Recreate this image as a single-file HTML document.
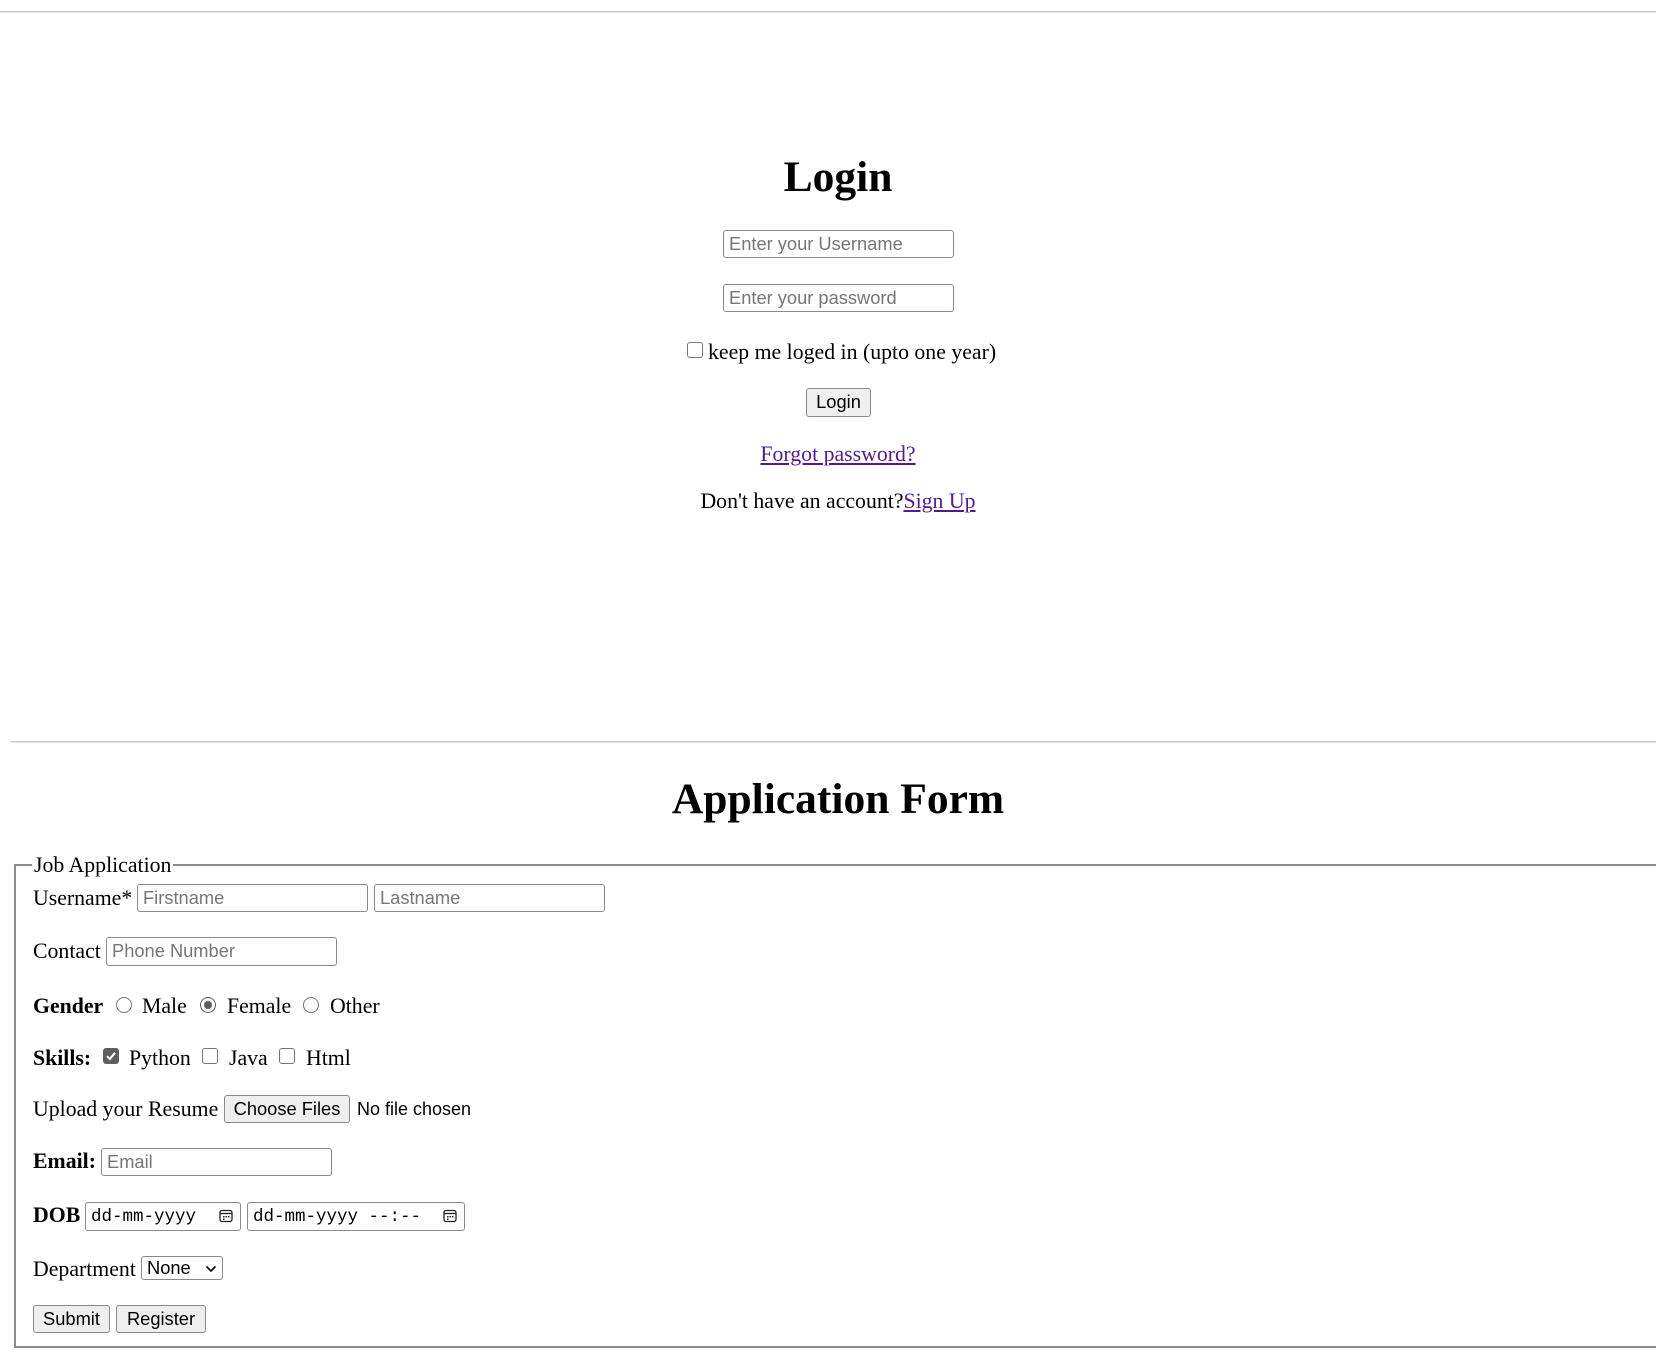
<!DOCTYPE html>
<html><head><meta charset="utf-8"><style>
*{box-sizing:border-box;margin:0;padding:0}
html,body{width:1656px;height:1360px;overflow:hidden;background:#fff;position:relative}
body{font-family:"Liberation Serif",serif;font-size:21.8px;color:#000}
.a{position:absolute;white-space:nowrap;line-height:26px}
.hr{position:absolute;height:1.5px;background:#c8c8c8;border-bottom:1px solid #e6e6e6}
.in{position:absolute;border:1.4px solid #8a8a8a;border-radius:3px;background:#fff;font-family:"Liberation Sans",sans-serif;font-size:18.3px;color:#767676;padding-left:5px;line-height:25px;white-space:nowrap}
.btn{position:absolute;border:1.4px solid #8a8a8a;border-radius:3px;background:#efefef;font-family:"Liberation Sans",sans-serif;font-size:18.3px;color:#000;text-align:center;line-height:25px;white-space:nowrap}
.c{text-align:center;left:11px;width:1654px}
.lnk{color:#551a8b;text-decoration:underline}
.cb{position:absolute;width:16px;height:16px;border:1.4px solid #767676;border-radius:3px;background:#fff}
.rd{position:absolute;width:16px;height:16px;border:1.4px solid #767676;border-radius:50%;background:#fff}
.mono{font-family:"Liberation Mono",monospace;color:#000;font-size:17.5px;line-height:29px}
b{font-weight:bold}
</style></head><body>
<div class="hr" style="left:0;top:11px;width:1656px"></div>

<div class="a c" style="top:151px;font-size:43.5px;line-height:52px;font-weight:bold">Login</div>
<div class="in" style="left:723px;top:230px;width:231px;height:28px">Enter your Username</div>
<div class="in" style="left:723px;top:284px;width:231px;height:28px">Enter your password</div>
<div class="cb" style="left:687px;top:342px"></div>
<div class="a" style="left:708px;top:339px">keep me loged in (upto one year)</div>
<div class="btn" style="left:806px;top:388px;width:65px;height:29px">Login</div>
<div class="a c" style="top:441px"><span class="lnk">Forgot password?</span></div>
<div class="a c" style="top:488px">Don't have an account?<span class="lnk">Sign Up</span></div>

<div class="hr" style="left:11px;top:741px;width:1645px"></div>
<div class="a c" style="top:773px;font-size:43.5px;line-height:52px;font-weight:bold">Application Form</div>

<div style="position:absolute;left:14px;top:864px;width:1700px;height:484px;border:2px solid #8a8a8a"></div>
<div class="a" style="left:32px;top:852px;background:#fff;padding:0 2px">Job Application</div>

<div class="a" style="left:33px;top:885px">Username*</div>
<div class="in" style="left:137px;top:884px;width:231px;height:28px">Firstname</div>
<div class="in" style="left:374px;top:884px;width:231px;height:28px">Lastname</div>

<div class="a" style="left:33px;top:938px">Contact</div>
<div class="in" style="left:106px;top:937px;width:231px;height:29px">Phone Number</div>

<div class="a" style="left:33px;top:993px"><b>Gender</b></div>
<div class="rd" style="left:116px;top:997px"></div>
<div class="a" style="left:142px;top:993px">Male</div>
<div class="rd" style="left:200px;top:997px;border-color:#5e5e5e"><div style="position:absolute;left:2.5px;top:2.5px;width:8px;height:8px;border-radius:50%;background:#5e5e5e"></div></div>
<div class="a" style="left:227px;top:993px">Female</div>
<div class="rd" style="left:303px;top:997px"></div>
<div class="a" style="left:330px;top:993px">Other</div>

<div class="a" style="left:33px;top:1045px"><b>Skills:</b></div>
<div class="cb" style="left:103px;top:1048px;background:#5e5e5e;border-color:#5e5e5e"><svg width="14" height="14" viewBox="0 0 14 14" style="position:absolute;left:0;top:0"><path d="M3 7.2 L5.8 10 L11 3.8" stroke="#fff" stroke-width="2" fill="none"/></svg></div>
<div class="a" style="left:129px;top:1045px">Python</div>
<div class="cb" style="left:202px;top:1048px"></div>
<div class="a" style="left:229px;top:1045px">Java</div>
<div class="cb" style="left:279px;top:1048px"></div>
<div class="a" style="left:306px;top:1045px">Html</div>

<div class="a" style="left:33px;top:1096px">Upload your Resume</div>
<div class="btn" style="left:224px;top:1095px;width:126px;height:28px">Choose Files</div>
<div class="a" style="left:357px;top:1096px;font-family:'Liberation Sans',sans-serif;font-size:18px">No file chosen</div>

<div class="a" style="left:33px;top:1148px"><b>Email:</b></div>
<div class="in" style="left:101px;top:1148px;width:231px;height:28px">Email</div>

<div class="a" style="left:33px;top:1202px"><b>DOB</b></div>
<div class="in mono" style="left:85px;top:1202px;width:156px;height:29px">dd-mm-yyyy
<svg width="14" height="14" viewBox="0 0 14 14" style="position:absolute;left:133px;top:6px"><rect x="1" y="1.5" width="12" height="11" rx="2" fill="none" stroke="#222" stroke-width="1.3"/><line x1="1" y1="4.5" x2="13" y2="4.5" stroke="#222" stroke-width="1.3"/><rect x="4" y="7" width="1.5" height="1.5" fill="#222"/><rect x="6.5" y="7" width="1.5" height="1.5" fill="#222"/><rect x="9" y="7" width="1.5" height="1.5" fill="#222"/><rect x="4" y="9.5" width="1.5" height="1.5" fill="#222"/></svg></div>
<div class="in mono" style="left:247px;top:1202px;width:218px;height:29px">dd-mm-yyyy --:--
<svg width="14" height="14" viewBox="0 0 14 14" style="position:absolute;left:195px;top:6px"><rect x="1" y="1.5" width="12" height="11" rx="2" fill="none" stroke="#222" stroke-width="1.3"/><line x1="1" y1="4.5" x2="13" y2="4.5" stroke="#222" stroke-width="1.3"/><rect x="4" y="7" width="1.5" height="1.5" fill="#222"/><rect x="6.5" y="7" width="1.5" height="1.5" fill="#222"/><rect x="9" y="7" width="1.5" height="1.5" fill="#222"/><rect x="4" y="9.5" width="1.5" height="1.5" fill="#222"/></svg></div>

<div class="a" style="left:33px;top:1256px">Department</div>
<div class="in" style="left:141px;top:1256px;width:82px;height:24px;color:#000;line-height:21px;padding-left:5px">None
<svg width="12" height="8" viewBox="0 0 12 8" style="position:absolute;left:63px;top:8px"><path d="M1.5 1.5 L6 6 L10.5 1.5" stroke="#000" stroke-width="1.6" fill="none"/></svg></div>

<div class="btn" style="left:33px;top:1305px;width:77px;height:28px">Submit</div>
<div class="btn" style="left:116px;top:1305px;width:90px;height:28px">Register</div>
</body></html>
